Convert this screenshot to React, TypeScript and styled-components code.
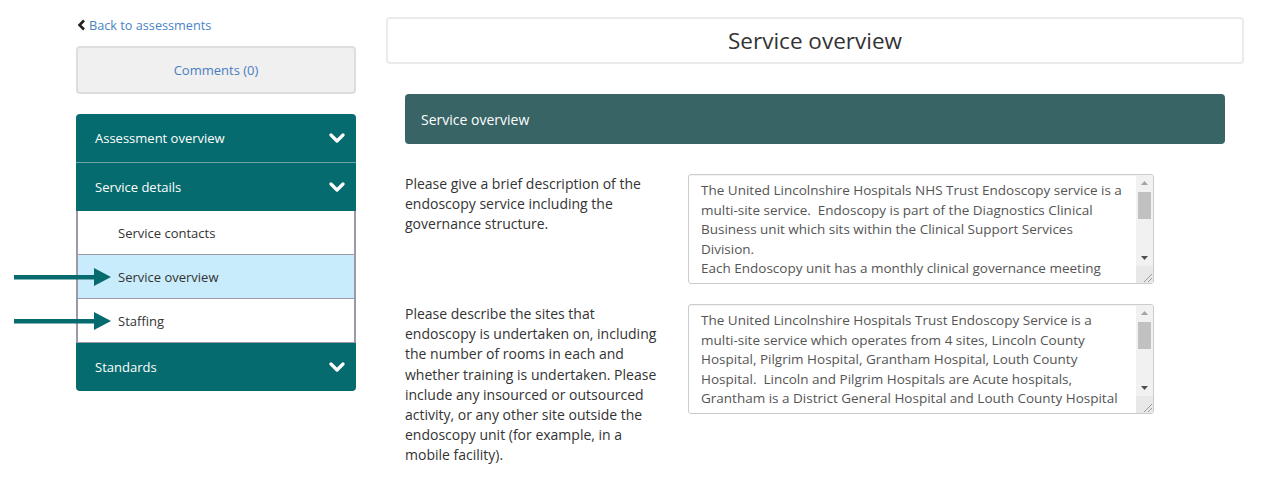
import React from "react";
import styled, { createGlobalStyle } from "styled-components";

const Global = createGlobalStyle`
  html, body { margin: 0; padding: 0; background: #fff; }
  body { font-family: "Open Sans", "Liberation Sans", sans-serif; font-size: 14px; color: #333; }
  * { box-sizing: border-box; }
`;

const Page = styled.div`
  display: flex;
  gap: 30px;
  padding-left: 76px;
  width: 1279px;
`;

const Sidebar = styled.aside`
  width: 280px;
  padding-top: 15px;
  display: flex;
  flex-direction: column;
`;

const BackLink = styled.a`
  display: flex;
  align-items: center;
  gap: 3px;
  height: 20px;
  color: #4a84c4;
  font-size: 12.7px;
  line-height: 20px;
  text-decoration: none;
  margin-left: 1px;
`;

const CommentsButton = styled.button`
  margin-top: 11px;
  height: 48px;
  width: 100%;
  background: #f0f0f0;
  border: 2px solid #dedede;
  border-radius: 4px;
  color: #4a7dbf;
  font-family: inherit;
  font-size: 13px;
`;

const Nav = styled.nav`
  margin-top: 20px;
  display: flex;
  flex-direction: column;
`;

const NavHeader = styled.div<{ $first?: boolean; $last?: boolean }>`
  background: #066b6e;
  color: #fff;
  display: flex;
  align-items: center;
  justify-content: space-between;
  padding: 0 11px 0 19px;
  font-size: 13px;
  border-radius: ${(p) => (p.$first ? "4px 4px 0 0" : p.$last ? "0 0 4px 4px" : "0")};
  border-bottom: ${(p) => (p.$first ? "1px solid #6fa2a4" : "none")};
  height: ${(p) => (p.$first ? "49px" : "48px")};
`;

const SubItem = styled.div<{ $active?: boolean }>`
  position: relative;
  height: 44px;
  display: flex;
  align-items: center;
  padding-left: 40px;
  background: ${(p) => (p.$active ? "#c8ecfc" : "#fff")};
  border-left: 2px solid #9c9aa8;
  border-right: 2px solid #9c9aa8;
  border-bottom: 1px solid #9c9aa8;
  color: #333;
  font-size: 13px;
`;

const Arrow = styled.svg`
  position: absolute;
  left: -64px;
  top: 50%;
  transform: translateY(-50%);
`;

const Main = styled.main`
  width: 858px;
  padding-top: 17px;
`;

const TitleBox = styled.div`
  height: 47px;
  border: 2px solid #ebebeb;
  border-radius: 4px;
  display: flex;
  align-items: center;
  justify-content: center;
  font-size: 22.5px;
  color: #333;
`;

const Section = styled.section`
  padding: 30px 19px 0;
`;

const SectionHeader = styled.div`
  height: 50px;
  background: #386466;
  border-radius: 4px;
  color: #fff;
  display: flex;
  align-items: center;
  padding-left: 16px;
  font-size: 14px;
`;

const Questions = styled.div`
  padding-top: 30px;
  display: flex;
  flex-direction: column;
  gap: 20px;
`;

const Question = styled.div`
  display: grid;
  grid-template-columns: 258px 466px;
  column-gap: 25px;
  align-items: start;
`;

const Label = styled.label`
  font-size: 14px;
  line-height: 20.2px;
  color: #333;
`;

const Field = styled.div`
  width: 466px;
  height: 110px;
  display: flex;
  border: 1px solid #cccccc;
  border-radius: 3px;
  overflow: hidden;
  box-shadow: inset 0 1px 1px rgba(0,0,0,0.06);
  background: #fff;
`;

const Answer = styled.textarea`
  flex: 1;
  min-width: 0;
  height: 100%;
  border: none;
  outline: none;
  resize: none;
  background: transparent;
  padding: 6px 11px 6px 12px;
  font-family: "Open Sans", "Liberation Sans", sans-serif;
  font-size: 13.5px;
  line-height: 19.5px;
  color: #555;
  overflow: hidden;
`;

const ScrollBar = styled.div`
  width: 17px;
  display: flex;
  flex-direction: column;
  background: #f1f1f1;
`;

const ScrollButton = styled.div`
  height: 16px;
  display: flex;
  align-items: center;
  justify-content: center;
`;

const ScrollTrack = styled.div`
  flex: 1;
  padding: 1px 2px;
`;

const Thumb = styled.div`
  height: 27px;
  background: #c1c1c1;
`;

const ResizeCorner = styled.div`
  height: 17px;
  background: #e8e8e8;
  display: flex;
  align-items: flex-end;
  justify-content: flex-end;
`;

const Chevron = () => (
  <svg width="16" height="10" viewBox="0 0 16 10">
    <polyline points="2,2 8,8 14,2" fill="none" stroke="#fff" strokeWidth="3.2" strokeLinecap="round" strokeLinejoin="round" />
  </svg>
);

const PointerArrow = () => (
  <Arrow width="98" height="18" viewBox="0 0 98 18">
    <rect x="0" y="7" width="82" height="4.5" fill="#066b6e" />
    <polygon points="80,0 97,9 80,18" fill="#066b6e" />
  </Arrow>
);

const TextField = ({ value }: { value: string }) => (
  <Field>
    <Answer defaultValue={value} />
    <ScrollBar>
      <ScrollButton>
        <svg width="7" height="4" viewBox="0 0 7 4"><polygon points="0,4 3.5,0 7,4" fill="#a3a3a3" /></svg>
      </ScrollButton>
      <ScrollTrack>
        <Thumb />
      </ScrollTrack>
      <ScrollButton>
        <svg width="7" height="4" viewBox="0 0 7 4"><polygon points="0,0 3.5,4 7,0" fill="#505050" /></svg>
      </ScrollButton>
      <ResizeCorner>
        <svg width="12" height="12" viewBox="0 0 12 12">
          <line x1="3" y1="11" x2="11" y2="3" stroke="#9a9a9a" strokeWidth="1" />
          <line x1="7" y1="11" x2="11" y2="7" stroke="#9a9a9a" strokeWidth="1" />
        </svg>
      </ResizeCorner>
    </ScrollBar>
  </Field>
);

const answer1 = `The United Lincolnshire Hospitals NHS Trust Endoscopy service is a multi-site service.  Endoscopy is part of the Diagnostics Clinical Business unit which sits within the Clinical Support Services Division.
Each Endoscopy unit has a monthly clinical governance meeting and reports to Trust Wide governance meetings through the divisional structure.`;

const answer2 = `The United Lincolnshire Hospitals Trust Endoscopy Service is a multi-site service which operates from 4 sites, Lincoln County Hospital, Pilgrim Hospital, Grantham Hospital, Louth County Hospital.  Lincoln and Pilgrim Hospitals are Acute hospitals, Grantham is a District General Hospital and Louth County Hospital is a community hospital.`;

export default function App() {
  return (
    <>
      <Global />
      <Page>
        <Sidebar>
          <BackLink href="#">
            <svg width="9" height="12" viewBox="0 0 9 12">
              <polyline points="7,1.5 2.5,6 7,10.5" fill="none" stroke="#222" strokeWidth="2.6" />
            </svg>
            Back to assessments
          </BackLink>
          <CommentsButton>Comments (0)</CommentsButton>
          <Nav>
            <NavHeader $first>
              Assessment overview
              <Chevron />
            </NavHeader>
            <NavHeader>
              Service details
              <Chevron />
            </NavHeader>
            <SubItem>Service contacts</SubItem>
            <SubItem $active>
              <PointerArrow />
              Service overview
            </SubItem>
            <SubItem>
              <PointerArrow />
              Staffing
            </SubItem>
            <NavHeader $last>
              Standards
              <Chevron />
            </NavHeader>
          </Nav>
        </Sidebar>
        <Main>
          <TitleBox>Service overview</TitleBox>
          <Section>
            <SectionHeader>Service overview</SectionHeader>
            <Questions>
              <Question>
                <Label>Please give a brief description of the endoscopy service including the governance structure.</Label>
                <TextField value={answer1} />
              </Question>
              <Question>
                <Label>
                  Please describe the sites that endoscopy is undertaken on, including the number of rooms in each and whether training is undertaken. Please include any insourced or outsourced activity, or any other site outside the endoscopy unit (for example, in a mobile facility).
                </Label>
                <TextField value={answer2} />
              </Question>
            </Questions>
          </Section>
        </Main>
      </Page>
    </>
  );
}
